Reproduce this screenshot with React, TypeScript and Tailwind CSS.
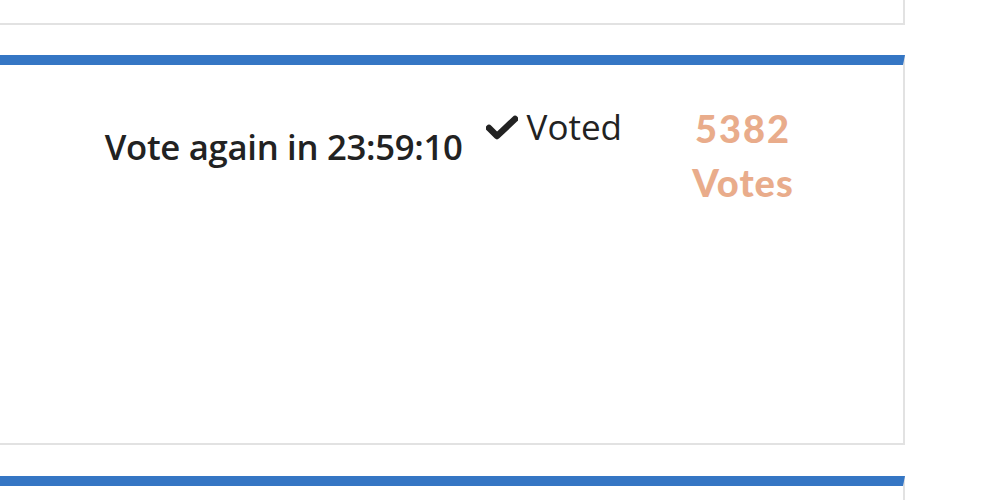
import React from "react";

export default function App() {
  return (
    <div className="w-[998px] h-[500px] bg-white overflow-hidden flex flex-col" style={{ fontFamily: '"Open Sans", sans-serif' }}>
      <div className="h-[25px] w-[905px] shrink-0 border-b-2 border-r-2 border-[#e2e2e2]" />
      <div className="h-[30px] shrink-0" />
      <div className="w-[905px] h-[390px] shrink-0 border-t-[10px] border-t-[#3576c4] border-r-2 border-b-2 border-[#e2e2e2] flex justify-end pr-[100px]">
        <div className="flex items-start">
          <div className="pt-[65px] text-[34.7px] font-semibold text-[#222] leading-none tracking-[-0.3px]">Vote again in 23:59:10</div>
          <div className="ml-[23px] pt-[44px] flex items-center text-[#222]">
            <svg width="32" height="25" viewBox="0 0 32 25" className="mr-[9px] mt-[2px]">
              <path d="M3 13 L11 21 L29 4" fill="none" stroke="#222" strokeWidth="6.5" strokeLinecap="round" strokeLinejoin="round" />
            </svg>
            <span className="text-[35px] leading-none">Voted</span>
          </div>
          <div className="ml-[61px] pt-[44px] w-[120px] flex flex-col items-center text-[#e9ac8b] font-black leading-none" style={{ fontFamily: 'Lato, sans-serif' }}>
            <span className="text-[38px] tracking-[2px]">5382</span>
            <span className="text-[38px] mt-[16px] tracking-[1px]">Votes</span>
          </div>
        </div>
      </div>
      <div className="h-[31px] shrink-0" />
      <div className="w-[905px] h-[40px] shrink-0 border-t-[10px] border-t-[#3576c4] border-r-2 border-[#e2e2e2]" />
    </div>
  );
}
